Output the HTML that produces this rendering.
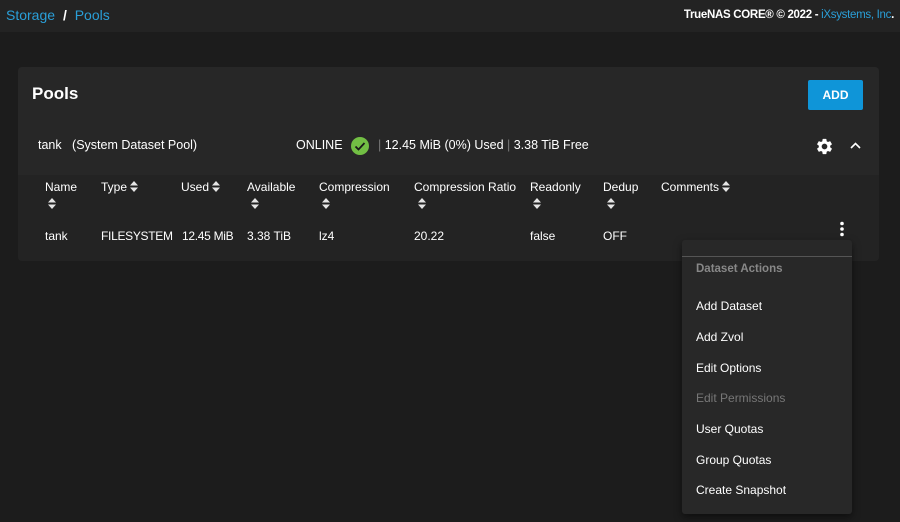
<!DOCTYPE html>
<html><head><style>
*{margin:0;padding:0;box-sizing:border-box}
body{width:900px;height:522px;background:#1c1c1c;font-family:"Liberation Sans",sans-serif;color:#fff;position:relative;overflow:hidden;font-size:12px}
.a{position:absolute;white-space:nowrap}
.mi{position:absolute;left:14px;font-size:12px;color:#fff}
.sv{display:inline-block;vertical-align:-1px;margin-left:3px}
</style></head><body>
<svg width="0" height="0" style="position:absolute"><defs><symbol id="so" viewBox="0 0 8 11"><path d="M0 4.5L4 0l4 4.5zM0 6.5L4 11l4-4.5z" fill="#e6e6e6"/></symbol></defs></svg>
<div class="a" style="left:0;top:0;width:900px;height:32px;background:#232323"></div>
<div class="a" style="left:6px;top:7px;font-size:14px;color:#2a9fd8">Storage <span style="color:#fff;font-weight:bold;margin:0 4px">/</span> Pools</div>
<div class="a" style="right:6px;top:9px;font-size:11.5px;font-weight:bold;letter-spacing:-0.3px">TrueNAS CORE® © 2022 - <span style="color:#2a9fd8;font-weight:normal">iXsystems, Inc</span>.</div>

<div class="a" style="left:18px;top:67px;width:861px;height:194px;background:#272727;border-radius:4px"></div>
<div class="a" style="left:18px;top:175px;width:861px;height:86px;background:#232323;border-radius:0 0 4px 4px"></div>
<div class="a" style="left:32px;top:84px;font-size:17px;font-weight:bold">Pools</div>
<div class="a" style="left:808px;top:80px;width:55px;height:30px;background:#0f95d8;border-radius:2px;font-size:12px;font-weight:bold;text-align:center;line-height:30px">ADD</div>

<div class="a" style="left:38px;top:138px;font-size:12.5px">tank&nbsp;&nbsp;&nbsp;(System Dataset Pool)</div>
<div class="a" style="left:296px;top:138px;font-size:12.5px">ONLINE</div>
<svg class="a" style="left:351px;top:137px" width="18" height="18"><circle cx="9" cy="9" r="9" fill="#72bf44"/><path d="M4.5 9.5l3 3 6-6.5" stroke="#1a1a1a" stroke-width="1.8" fill="none"/></svg>
<div class="a" style="left:378px;top:138px;font-size:12.5px"><span style="color:#777">|</span> 12.45 MiB (0%) Used <span style="color:#777">|</span> 3.38 TiB Free</div>
<svg class="a" style="left:815px;top:137px" width="19" height="19" viewBox="0 0 24 24"><path fill="#fff" d="M19.14 12.94c.04-.3.06-.61.06-.94s-.02-.64-.07-.94l2.030-1.58a.49.49 0 0 0 .12-.61l-1.92-3.32a.49.49 0 0 0-.59-.22l-2.39.96c-.5-.38-1.03-.7-1.62-.94l-.36-2.54a.48.48 0 0 0-.48-.41h-3.84c-.24 0-.43.17-.47.41l-.36 2.54c-.59.24-1.13.57-1.620.94l-2.39-.96a.48.48 0 0 0-.59.22L2.74 8.87c-.12.21-.08.47.12.61l2.03 1.58c-.05.3-.09.63-.09.94s.02.64.07.94l-2.03 1.58a.49.49 0 0 0-.12.61l1.92 3.32c.12.22.37.29.59.22l2.39-.96c.5.38 1.03.7 1.62.94l.36 2.54c.05.24.24.41.48.41h3.84c.24 0 .44-.17.47-.41l.36-2.54c.59-.24 1.13-.56 1.62-.94l2.39.96c.22.08.47 0 .59-.22l1.920-3.32c.12-.22.07-.47-.12-.61l-2.01-1.58zM12 15.6A3.6 3.6 0 1 1 12 8.4a3.6 3.6 0 0 1 0 7.2z"/></svg>
<svg class="a" style="left:850px;top:142px" width="11" height="8"><path d="M1 6l4.5-4.5L10 6" stroke="#fff" stroke-width="1.6" fill="none"/></svg>

<div class="a" style="left:45px;top:180px">Name</div><svg class="a" style="left:48px;top:198px" width="8" height="11"><use href="#so"/></svg>
<div class="a" style="left:101px;top:180px">Type<svg class="sv" width="8" height="11"><use href="#so"/></svg></div>
<div class="a" style="left:181px;top:180px">Used<svg class="sv" width="8" height="11"><use href="#so"/></svg></div>
<div class="a" style="left:247px;top:180px">Available</div><svg class="a" style="left:251px;top:198px" width="8" height="11"><use href="#so"/></svg>
<div class="a" style="left:319px;top:180px">Compression</div><svg class="a" style="left:322px;top:198px" width="8" height="11"><use href="#so"/></svg>
<div class="a" style="left:414px;top:180px">Compression Ratio</div><svg class="a" style="left:418px;top:198px" width="8" height="11"><use href="#so"/></svg>
<div class="a" style="left:530px;top:180px">Readonly</div><svg class="a" style="left:533px;top:198px" width="8" height="11"><use href="#so"/></svg>
<div class="a" style="left:603px;top:180px">Dedup</div><svg class="a" style="left:607px;top:198px" width="8" height="11"><use href="#so"/></svg>
<div class="a" style="left:661px;top:180px">Comments<svg class="sv" width="8" height="11"><use href="#so"/></svg></div>

<div class="a" style="left:45px;top:229px">tank</div>
<div class="a" style="left:101px;top:229px;letter-spacing:-0.3px">FILESYSTEM</div>
<div class="a" style="left:182px;top:229px;letter-spacing:-0.3px">12.45 MiB</div>
<div class="a" style="left:247px;top:229px">3.38 TiB</div>
<div class="a" style="left:319px;top:229px">lz4</div>
<div class="a" style="left:414px;top:229px">20.22</div>
<div class="a" style="left:530px;top:229px">false</div>
<div class="a" style="left:603px;top:229px">OFF</div>
<svg class="a" style="left:839px;top:221px" width="6" height="16"><circle cx="3" cy="2.5" r="1.8" fill="#fff"/><circle cx="3" cy="8" r="1.8" fill="#fff"/><circle cx="3" cy="13.5" r="1.8" fill="#fff"/></svg>

<div class="a" style="left:682px;top:240px;width:170px;height:274px;background:#282828;border-radius:3px;box-shadow:0 3px 8px rgba(0,0,0,.5)">
<div class="a" style="left:0;top:16px;width:170px;height:1px;background:#555"></div>
<div class="mi" style="top:23px;color:#888;font-weight:bold;font-size:11.5px">Dataset Actions</div>
<div class="mi" style="top:59px">Add Dataset</div>
<div class="mi" style="top:90px">Add Zvol</div>
<div class="mi" style="top:121px">Edit Options</div>
<div class="mi" style="top:151px;color:#777">Edit Permissions</div>
<div class="mi" style="top:182px">User Quotas</div>
<div class="mi" style="top:213px">Group Quotas</div>
<div class="mi" style="top:243px">Create Snapshot</div>
</div>
</body></html>
